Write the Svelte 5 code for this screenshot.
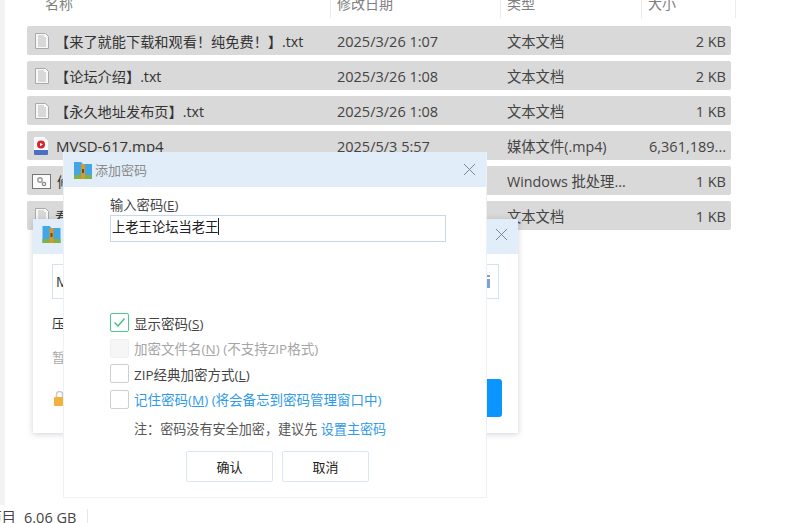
<script>
const files = [
	{ name: "【来了就能下载和观看！纯免费！】.txt", icon: "txt", date: "2025/3/26 1:07", type: "文本文档", size: "2 KB" },
	{ name: "【论坛介绍】.txt", icon: "txt", date: "2025/3/26 1:08", type: "文本文档", size: "2 KB" },
	{ name: "【永久地址发布页】.txt", icon: "txt", date: "2025/3/26 1:08", type: "文本文档", size: "1 KB" },
	{ name: "MVSD-617.mp4", icon: "video", date: "2025/5/3 5:57", type: "媒体文件(.mp4)", size: "6,361,189..." },
	{ name: "修复.bat", icon: "bat", date: "2025/3/26 1:08", type: "Windows 批处理...", size: "1 KB" },
	{ name: "看我.txt", icon: "txt", date: "2025/3/26 1:08", type: "文本文档", size: "1 KB" }
];
const columns = ["名称", "修改日期", "类型", "大小"];
</script>

<div class="page">
	<div class="strip"></div>
	<div class="explorer">
		<div class="head">
			{#each columns as col}
				<div class="head-cell">{col}</div>
			{/each}
		</div>
		<div class="rows">
			{#each files as file}
				<div class="row">
					<div class="name">
						{#if file.icon === "txt"}
							<svg class="file-icon" width="14" height="16" viewBox="0 0 14 16">
								<path d="M.5.5h10l3 3v12H.5z" fill="#f8f8f8" stroke="#a9a9a9" />
								<path d="M3 3h6M3 5h8M3 7h8M3 9h8M3 11h8M3 13h8" stroke="#b8b8b8" />
							</svg>
						{:else if file.icon === "video"}
							<svg class="file-icon video" width="14" height="18" viewBox="0 0 14 18">
								<path d="M1 0h9l4 4v14H0V1z" fill="#fbfbfb" />
								<circle cx="7" cy="7.500" r="4" fill="#d8232a" />
								<path d="M6 5.700 9 7.500 6 9.300z" fill="#fff" />
								<path d="M0 13h14v4a1 1 0 0 1-1 1H1a1 1 0 0 1-1-1z" fill="#4a6fc4" />
							</svg>
						{:else}
							<svg class="file-icon bat" width="19" height="15" viewBox="0 0 19 15">
								<rect x=".5" y=".5" width="18" height="14" fill="#fbfbfb" stroke="#777" />
								<circle cx="8" cy="6" r="2.200" fill="none" stroke="#999" stroke-width="1.400" />
								<circle cx="12" cy="10" r="1.700" fill="none" stroke="#888" stroke-width="1.200" />
							</svg>
						{/if}
						<span class:big={file.icon === "video"}>{file.name}</span>
					</div>
					<div class="date">{file.date}</div>
					<div class="type">{file.type}</div>
					<div class="size">{file.size}</div>
				</div>
			{/each}
		</div>
	</div>
	<div class="status">
		<span class="count">项目</span>
		<span class="total">6.06 GB</span>
	</div>

	<!-- dialog behind -->
	<div class="win back">
		<div class="title">
			<svg width="19" height="18" viewBox="0 0 18 18">
				<path d="M0 1h7l2 2h9v15H0z" fill="#43a6e8" />
				<path d="M0 14h18v4H0z" fill="#7cb342" />
				<path d="M7 3h4v15H7z" fill="#d9982b" />
				<path d="M8 8h2v4H8z" fill="#6d4a12" />
			</svg>
			<svg class="close" width="13" height="13" viewBox="0 0 13 13"><path d="M1 1l11 11M12 1 1 12" stroke="#7c8794" fill="none" /></svg>
		</div>
		<div class="back-body">
			<div class="back-input">
				<span>M</span>
				<svg width="6" height="13" viewBox="0 0 6 13"><path d="M0 0h6v2H0zM0 4h6v9H0z" fill="#7ea2d6" /></svg>
			</div>
			<div class="back-line">压缩</div>
			<div class="back-line muted">暂无</div>
			<div class="back-foot">
				<svg width="11" height="15" viewBox="0 0 11 15">
					<path d="M2.500 6V3.500a3 3 0 0 1 6 0V6" stroke="#c9c9c9" stroke-width="1.500" fill="none" />
					<rect y="6" width="11" height="9" rx="1" fill="#f2b13c" />
				</svg>
				<div class="back-btn"></div>
			</div>
		</div>
	</div>

	<!-- password dialog -->
	<div class="win front">
		<div class="title">
			<svg width="18" height="18" viewBox="0 0 18 18">
				<path d="M0 1h7l2 2h9v15H0z" fill="#43a6e8" />
				<path d="M0 14h18v4H0z" fill="#7cb342" />
				<path d="M7 3h4v15H7z" fill="#d9982b" />
				<path d="M8 8h2v4H8z" fill="#6d4a12" />
			</svg>
			<span class="title-text">添加密码</span>
			<svg class="close" width="13" height="13" viewBox="0 0 13 13"><path d="M1 1l11 11M12 1 1 12" stroke="#7c8794" fill="none" /></svg>
		</div>
		<div class="body">
			<div class="label">输入密码(<u>E</u>)</div>
			<div class="input"><span>上老王论坛当老王</span><i class="caret"></i></div>
			<div class="checks">
				<div class="check">
					<span class="box on">
						<svg width="13" height="11" viewBox="0 0 13 11"><path d="M1.500 5.500 5 9l6.500-7.500" stroke="#3fc07a" stroke-width="1.400" fill="none" /></svg>
					</span>
					<span>显示密码(<u>S</u>)</span>
				</div>
				<div class="check disabled">
					<span class="box"></span>
					<span>加密文件名(<u>N</u>) (不支持ZIP格式)</span>
				</div>
				<div class="check">
					<span class="box"></span>
					<span>ZIP经典加密方式(<u>L</u>)</span>
				</div>
				<div class="check link">
					<span class="box"></span>
					<span>记住密码(<u>M</u>) (将会备忘到密码管理窗口中)</span>
				</div>
			</div>
			<div class="note">注：密码没有安全加密，建议先 <span class="link">设置主密码</span></div>
			<div class="buttons">
				<button>确认</button>
				<button>取消</button>
			</div>
		</div>
	</div>
</div>

<style>
:global(body) {
	margin: 0;
	background: #fff;
	overflow: hidden;
}

.page {
	position: relative;
	width: 800px;
	height: 523px;
	overflow: hidden;
	font-family: "Open Sans", "Noto Sans CJK SC", sans-serif;
	font-size: 14px;
	color: #3a3a3a;
}

.strip {
	position: absolute;
	left: 0;
	top: 0;
	width: 5px;
	height: 505px;
	background: #f2f2f2;
}

.explorer {
	padding-left: 27px;
}

.head {
	display: grid;
	grid-template-columns: 304px 170px 141px 94px;
	height: 18px;
	overflow: hidden;
}

.head-cell {
	display: flex;
	align-items: flex-end;
	height: 18px;
	padding: 0 0 5px 6px;
	box-sizing: border-box;
	border-right: 1px solid #eaeaea;
	color: #808080;
	line-height: 18px;
}

.head-cell:first-child {
	padding-left: 18px;
}

.rows {
	display: flex;
	flex-direction: column;
	gap: 6px;
	width: 704px;
	margin-top: 8px;
}

.row {
	display: grid;
	grid-template-columns: 303px 170px 141px 90px;
	align-items: center;
	height: 29px;
	background: #d9d9d9;
	border-radius: 2px;
	line-height: 29px;
}

.name {
	display: flex;
	align-items: center;
	padding-left: 8px;
	gap: 6px;
	white-space: nowrap;
	font-size: 14.200px;
	color: #333;
}

.name span,
.date,
.type,
.size {
	padding-top: 1px;
}

.name .big {
	font-size: 15px;
}

.file-icon {
	flex: none;
}

.file-icon.video {
	margin-left: -1px;
	margin-right: 2px;
}

.file-icon.bat {
	margin-left: -3px;
}

.date,
.type {
	padding-left: 7px;
	white-space: nowrap;
	color: #444;
}

.date {
	font-size: 14.500px;
}

.type {
	font-size: 14.300px;
}

.size {
	padding-right: 5px;
	text-align: right;
	white-space: nowrap;
	font-size: 14.500px;
	color: #444;
}

.status {
	position: absolute;
	left: -13px;
	top: 509px;
	display: flex;
	gap: 8px;
	height: 14px;
	padding-right: 11px;
	border-right: 1px solid #e8e8e8;
	font-size: 14.500px;
	line-height: 18px;
	color: #444;
}

.win {
	position: absolute;
	background: #fff;
	box-sizing: border-box;
}

.back {
	left: 33px;
	top: 219px;
	width: 485px;
	height: 214px;
	box-shadow: 0 1px 6px rgba(90, 100, 120, 0.3);
}

.front {
	left: 63px;
	top: 152px;
	width: 424px;
	height: 346px;
	border: 1px solid #edf1f6;
	border-top: 0;
}

.title {
	display: flex;
	align-items: center;
	height: 35px;
	padding: 0 10px;
	box-sizing: border-box;
	background: #e1eefa;
}

.back .title {
	padding: 0 10px 5px 9px;
}

.title-text {
	margin-left: 3px;
	font-size: 13px;
	color: #8a8a8a;
}

.close {
	margin-left: auto;
}

.back-body {
	padding: 10px 19px 15px;
}

.back-input {
	display: flex;
	align-items: center;
	justify-content: space-between;
	height: 35px;
	box-sizing: border-box;
	padding: 0 8px 0 3px;
	border: 1px solid #d5e2f0;
	font-size: 14px;
	color: #333;
}

.back-line {
	margin-top: 13px;
	line-height: 22px;
	font-size: 13px;
	color: #333;
}

.back-line.muted {
	margin-top: 12px;
	color: #aaa;
}

.back-foot {
	display: flex;
	align-items: center;
	justify-content: space-between;
	margin-top: 11px;
	margin-right: -3px;
	padding-left: 2px;
}

.back-btn {
	width: 90px;
	height: 38px;
	border-radius: 3px;
	background: #0a95ff;
}

.body {
	display: flex;
	flex-direction: column;
	padding: 9px 0 0 46px;
	font-size: 13px;
}

.label {
	line-height: 18px;
	font-size: 13.300px;
	color: #444;
}

.input {
	display: flex;
	align-items: center;
	width: 336px;
	height: 27px;
	margin-top: 1px;
	padding: 0 0 4px 1px;
	box-sizing: border-box;
	border: 1px solid #c4d8ec;
	font-size: 13.300px;
	color: #222;
}

.caret {
	width: 1px;
	height: 17px;
	background: #222;
}

.checks {
	display: flex;
	flex-direction: column;
	gap: 6.500px;
	margin-top: 71px;
}

.check {
	display: flex;
	align-items: center;
	gap: 5px;
	height: 19px;
	white-space: nowrap;
	font-size: 13.500px;
	color: #444;
}

.box {
	display: flex;
	align-items: center;
	justify-content: center;
	width: 19px;
	height: 19px;
	box-sizing: border-box;
	border: 1px solid #cfcfcf;
	border-radius: 2px;
}

.box.on {
	border-color: #4ccb86;
}

.check.disabled {
	color: #a5a5a5;
}

.check.disabled .box {
	background: #f6f6f6;
	border-color: #f0f0f0;
}

.check.link {
	color: #2f9be8;
}

.link {
	color: #2f9be8;
}

.note {
	margin: 11px 0 0 24px;
	line-height: 18px;
	white-space: nowrap;
	font-size: 13.100px;
	color: #555;
}

.buttons {
	display: flex;
	gap: 9px;
	margin: 13px 0 0 76px;
}

button {
	width: 87px;
	height: 31px;
	padding: 0;
	background: #fff;
	border: 1px solid #dbe6f1;
	border-radius: 2px;
	font: inherit;
	color: #222;
}
</style>
